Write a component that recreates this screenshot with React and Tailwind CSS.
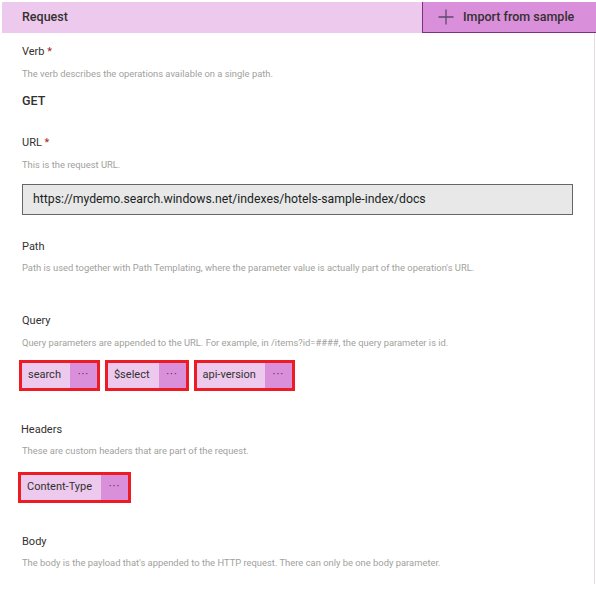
import React from "react";

const font = { fontFamily: 'Roboto, Lato, sans-serif' };

function Label({ children, required, className = "" }) {
  return (
    <div className={`h-[16px] leading-[16px] text-[11px] text-[#323130] ${className}`}>
      {children}
      {required && <span className="text-[#a4262c]"> *</span>}
    </div>
  );
}

function Desc({ children, className = "" }) {
  return (
    <div className={`h-[16px] leading-[16px] text-[9.4px] text-[#a19f9d] whitespace-nowrap ${className}`}>
      {children}
    </div>
  );
}

function Chip({ label }) {
  return (
    <div className="flex h-[31px] border-[3px] border-[#ed1c24]">
      <div className="flex items-center bg-[#edc9ed] pl-[6px] pr-[9px] text-[11px] text-[#323130]">{label}</div>
      <div className="flex w-[27px] items-center justify-center bg-[#da8fda] text-[11px] text-[#323130] tracking-[1px]">···</div>
    </div>
  );
}

export default function App() {
  return (
    <div className="relative h-[590px] w-[596px] overflow-hidden bg-white pt-[2px] pl-[2px]" style={font}>
      <div className="absolute right-[1px] top-[33px] bottom-[6px] w-px bg-[#e1dfdd]" />
      <div className="flex h-[31px] items-stretch bg-[#edc9ed]">
        <div className="flex flex-1 items-center pl-[20px] text-[12.5px] font-medium text-[#323130]">Request</div>
        <button className="flex w-[174px] items-center gap-[8px] border-b border-l border-[#7f2f80] bg-[#da8fda] pl-[14px] text-[12.5px] font-medium text-[#323130]">
          <svg width="18" height="18" viewBox="0 0 18 18" className="shrink-0">
            <path d="M9 1.5v15M1.5 9h15" stroke="#5c4a6e" strokeWidth="1.3" fill="none" />
          </svg>
          Import from sample
        </button>
      </div>

      <div className="pl-[20px] pr-[22px]">
        <Label required className="mt-[11px]">Verb</Label>
        <Desc className="mt-[6px]">The verb describes the operations available on a single path.</Desc>
        <div className="mt-[10px] h-[18px] leading-[18px] text-[12.5px] font-medium text-[#323130]">GET</div>

        <Label required className="mt-[25px]">URL</Label>
        <Desc className="mt-[6px]">This is the request URL.</Desc>
        <div className="mt-[11px] flex h-[31px] w-[551px] items-center border border-[#666666] bg-[#e8e8e8] pl-[10px] text-[12.25px] text-[#201f1e]">
          https://mydemo.search.windows.net/indexes/hotels-sample-index/docs
        </div>

        <Label className="mt-[24px]">Path</Label>
        <Desc className="mt-[5px]">Path is used together with Path Templating, where the parameter value is actually part of the operation's URL.</Desc>

        <Label className="mt-[37px]">Query</Label>
        <Desc className="mt-[6px]">Query parameters are appended to the URL. For example, in /items?id=####, the query parameter is id.</Desc>
        <div className="mt-[9px] -ml-[3px] flex gap-[5px]">
          <Chip label="search" />
          <Chip label="$select" />
          <Chip label="api-version" />
        </div>

        <Label className="mt-[31px] -ml-[1px]">Headers</Label>
        <Desc className="mt-[5px]">These are custom headers that are part of the request.</Desc>
        <div className="mt-[13px] -ml-[4px] flex">
          <Chip label="Content-Type" />
        </div>

        <Label className="mt-[31px]">Body</Label>
        <Desc className="mt-[5px]">The body is the payload that's appended to the HTTP request. There can only be one body parameter.</Desc>
      </div>
    </div>
  );
}
